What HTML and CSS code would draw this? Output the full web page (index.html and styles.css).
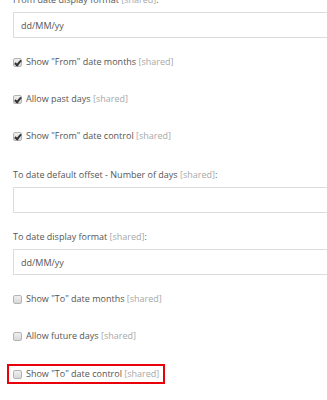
FILE: index.html
```html
<!DOCTYPE html>
<html lang="en">
<head>
    <meta charset="UTF-8">
    <meta name="viewport" content="width=device-width, initial-scale=1.0">
    <title>Date Range Settings</title>
    <link rel="stylesheet" href="styles.css">
</head>
<body>
    <div class="settings">
        <!-- From date -->
        <div class="form-group">
            <label for="from-format">From date display format <span class="shared">[shared]</span>:</label>
            <input type="text" id="from-format" value="dd/MM/yy">
        </div>

        <div class="check-list">
            <label class="check"><input type="checkbox" checked><span>Show "From" date months <span class="shared">[shared]</span></span></label>
            <label class="check"><input type="checkbox" checked><span>Allow past days <span class="shared">[shared]</span></span></label>
            <label class="check"><input type="checkbox" checked><span>Show "From" date control <span class="shared">[shared]</span></span></label>
        </div>

        <!-- To date -->
        <div class="form-group">
            <label for="to-offset">To date default offset - Number of days <span class="shared">[shared]</span>:</label>
            <input type="text" id="to-offset">
        </div>

        <div class="form-group">
            <label for="to-format">To date display format <span class="shared">[shared]</span>:</label>
            <input type="text" id="to-format" value="dd/MM/yy">
        </div>

        <div class="check-list">
            <label class="check"><input type="checkbox"><span>Show "To" date months <span class="shared">[shared]</span></span></label>
            <label class="check"><input type="checkbox"><span>Allow future days <span class="shared">[shared]</span></span></label>
            <label class="check highlight"><input type="checkbox"><span>Show "To" date control <span class="shared">[shared]</span></span></label>
        </div>
    </div>
</body>
</html>
```

FILE: styles.css
```css
:root {
    --text: #555555;
    --muted: #a8a8a8;
    --border: #dcdcdc;
    --highlight: #e8000b;
}

* {
    margin: 0;
    padding: 0;
    box-sizing: border-box;
    font-family: 'Open Sans', 'Liberation Sans', sans-serif;
}

body {
    background-color: #ffffff;
    color: var(--text);
    font-size: 9px;
    overflow: hidden;
}

.settings {
    margin-top: -7px;
    padding-left: 13px;
}

.shared {
    color: var(--muted);
}

.form-group {
    margin-bottom: 17px;
}

.form-group label {
    display: block;
    line-height: 14px;
    margin-bottom: 5px;
}

.form-group input {
    display: block;
    width: 340px;
    height: 26px;
    padding: 0 7px;
    border: 1px solid var(--border);
    border-radius: 0;
    font-size: 9px;
    color: var(--text);
    background-color: #ffffff;
}

.check-list {
    margin-bottom: 25px;
}

.check {
    display: flex;
    align-items: center;
    gap: 4px;
    height: 14px;
    line-height: 14px;
    margin-bottom: 23px;
}

.check:last-child {
    margin-bottom: 0;
}

.check-list:last-child .check:nth-child(2) {
    margin-bottom: 24px;
}

.check input {
    appearance: none;
    -webkit-appearance: none;
    flex: none;
    width: 9px;
    height: 9px;
    border: 1px solid #b4b4b4;
    border-radius: 2px;
    background: linear-gradient(#f0f0f0, #d8d8d8);
    position: relative;
}

.check input:checked::after {
    content: "";
    position: absolute;
    left: 2px;
    top: 0px;
    width: 2px;
    height: 5px;
    border: solid #333333;
    border-width: 0 2px 2px 0;
    transform: rotate(40deg);
}

.highlight {
    display: inline-flex;
    height: 20px;
    margin: -3px 0 0 -6px;
    padding: 1px 4px;
    border: 2px solid var(--highlight);
}
```
